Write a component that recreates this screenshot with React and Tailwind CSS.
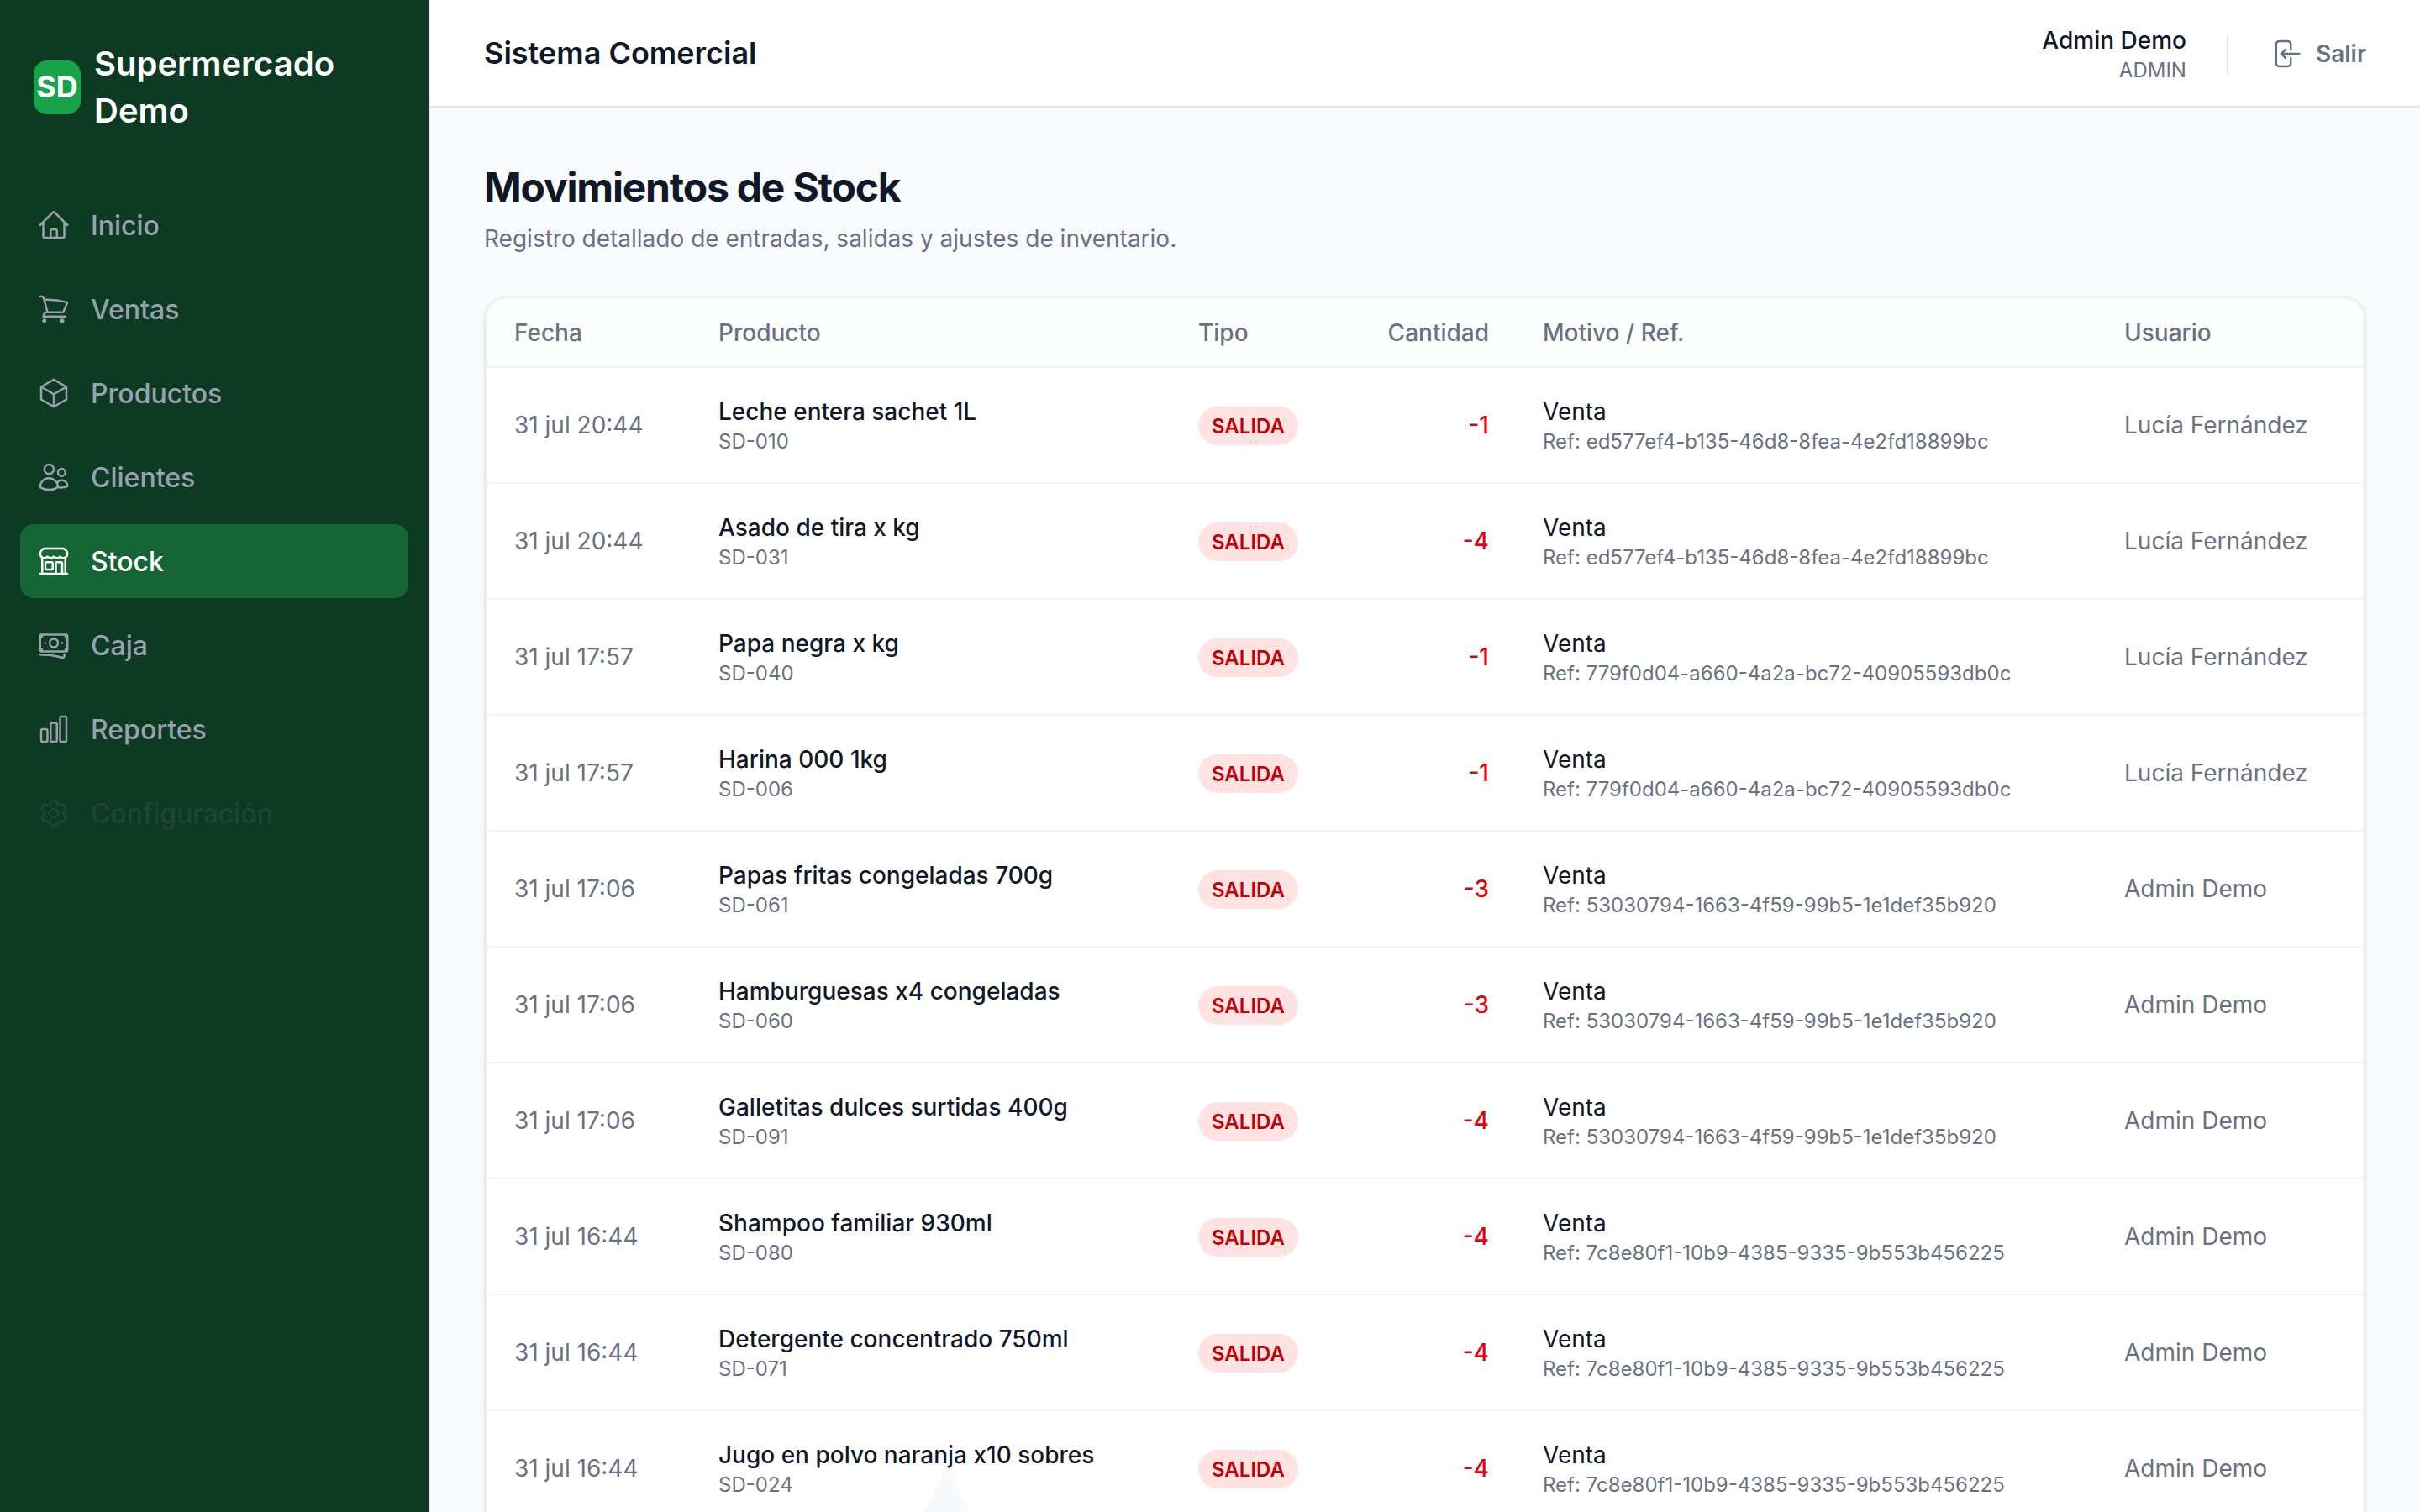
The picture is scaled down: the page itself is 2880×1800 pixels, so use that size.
import {
  HiOutlineHome, HiOutlineShoppingCart, HiOutlineCube, HiOutlineUsers,
  HiOutlineBuildingStorefront, HiOutlineBanknotes, HiOutlineChartBar,
  HiOutlineCog6Tooth, HiOutlineArrowLeftOnRectangle,
} from "react-icons/hi2";

const nav = [
  ["Inicio", HiOutlineHome],
  ["Ventas", HiOutlineShoppingCart],
  ["Productos", HiOutlineCube],
  ["Clientes", HiOutlineUsers],
  ["Stock", HiOutlineBuildingStorefront, "active"],
  ["Caja", HiOutlineBanknotes],
  ["Reportes", HiOutlineChartBar],
  ["Configuración", HiOutlineCog6Tooth, "disabled"],
];

const R1 = "ed577ef4-b135-46d8-8fea-4e2fd18899bc";
const R2 = "779f0d04-a660-4a2a-bc72-40905593db0c";
const R3 = "53030794-1663-4f59-99b5-1e1def35b920";
const R4 = "7c8e80f1-10b9-4385-9335-9b553b456225";

const rows = [
  ["31 jul 20:44", "Leche entera sachet 1L", "SD-010", "-1", R1, "Lucía Fernández"],
  ["31 jul 20:44", "Asado de tira x kg", "SD-031", "-4", R1, "Lucía Fernández"],
  ["31 jul 17:57", "Papa negra x kg", "SD-040", "-1", R2, "Lucía Fernández"],
  ["31 jul 17:57", "Harina 000 1kg", "SD-006", "-1", R2, "Lucía Fernández"],
  ["31 jul 17:06", "Papas fritas congeladas 700g", "SD-061", "-3", R3, "Admin Demo"],
  ["31 jul 17:06", "Hamburguesas x4 congeladas", "SD-060", "-3", R3, "Admin Demo"],
  ["31 jul 17:06", "Galletitas dulces surtidas 400g", "SD-091", "-4", R3, "Admin Demo"],
  ["31 jul 16:44", "Shampoo familiar 930ml", "SD-080", "-4", R4, "Admin Demo"],
  ["31 jul 16:44", "Detergente concentrado 750ml", "SD-071", "-4", R4, "Admin Demo"],
  ["31 jul 16:44", "Jugo en polvo naranja x10 sobres", "SD-024", "-4", R4, "Admin Demo"],
];

const COLS = "grid grid-cols-[243px_571px_225px_185px_692px_1fr] pl-8";

function NavItem({ label, Icon, state }) {
  const tone =
    state === "active" ? "bg-[#166534] text-white"
    : state === "disabled" ? "text-[#4a5565] opacity-35"
    : "text-[#99a1af]";
  return (
    <a className={`flex h-[88px] items-center gap-6 rounded-2xl px-5 text-[32px] font-medium ${tone}`}>
      <Icon className="size-10" />
      <span className="pt-0.5">{label}</span>
    </a>
  );
}

function Sidebar() {
  return (
    <aside className="flex w-[512px] shrink-0 flex-col border-r-2 border-[#e5e7eb] bg-[#0d3a22]">
      <div className="flex h-[208px] items-center gap-4 px-10 text-white">
        <div className="flex h-16 w-14 items-center justify-center rounded-2xl bg-[#16a34a] pb-0.5 text-4xl font-bold">SD</div>
        <div className="text-[40px] leading-[56px] font-semibold">Supermercado<br />Demo</div>
      </div>
      <nav className="flex flex-col gap-3 px-6 pt-4">
        {nav.map(([label, Icon, state]) => <NavItem key={label} label={label} Icon={Icon} state={state} />)}
      </nav>
    </aside>
  );
}

function Header() {
  return (
    <header className="flex h-32 shrink-0 items-center justify-between border-b-2 border-[#e5e7eb] bg-white px-16">
      <div className="text-[36px] font-semibold text-[#101828]">Sistema Comercial</div>
      <div className="flex items-center pt-0.5">
        <div className="text-right">
          <div className="text-[28px] leading-10 font-medium">Admin Demo</div>
          <div className="text-2xl leading-8 text-[#6a7282]">ADMIN</div>
        </div>
        <div className="ml-12 h-12 w-0.5 bg-[#e5e7eb]" />
        <div className="ml-12 flex items-center gap-4 text-[28px] font-semibold text-[#6a7282]">
          <HiOutlineArrowLeftOnRectangle className="size-10" />
          Salir
        </div>
      </div>
    </header>
  );
}

export default function App() {
  return (
    <div className="relative flex h-[1800px] w-[2880px] overflow-hidden bg-[#f9fafc] font-['Inter',sans-serif] text-[#101828]">
      <Sidebar />
      <div className="flex min-w-0 flex-1 flex-col">
        <Header />
        <main className="min-h-0 flex-1 overflow-hidden px-16 pt-16">
          <h1 className="text-5xl leading-[62px] font-bold tracking-tight">Movimientos de Stock</h1>
          <p className="mt-2.5 text-[28px] leading-10 text-[#6a7282]">Registro detallado de entradas, salidas y ajustes de inventario.</p>
          <div className="mx-0.5 mt-[50px] rounded-3xl border-2 border-[#f3f4f6] bg-white shadow-[0_0_0_2px_rgba(0,0,0,0.02),0_2px_6px_rgba(0,0,0,0.1),0_2px_4px_-2px_rgba(0,0,0,0.1)]">
            <div className={`${COLS} h-[82px] items-center rounded-t-[22px] border-b-2 border-[#f3f4f6] bg-[#fcfdfd] text-[28px] font-medium text-[#6a7282]`}>
              <div>Fecha</div>
              <div>Producto</div>
              <div>Tipo</div>
              <div className="pr-16 text-right">Cantidad</div>
              <div>Motivo / Ref.</div>
              <div>Usuario</div>
            </div>
            {rows.map(([date, name, code, qty, ref, user], i) => (
              <div key={i} className={`${COLS} h-[138px] items-center border-b-2 border-[#f3f4f6] text-[28px] text-[#6a7282]`}>
                <div>{date}</div>
                <div>
                  <div className="leading-10 font-medium text-[#101828]">{name}</div>
                  <div className="text-2xl leading-8">{code}</div>
                </div>
                <div className="flex pt-0.5"><span className="inline-flex h-[46px] items-center rounded-full bg-[#ffe2e2] px-4 pt-0.5 text-2xl font-semibold text-[#c10007]">SALIDA</span></div>
                <div className="pr-16 text-right font-medium text-[#e7000b]">{qty}</div>
                <div>
                  <div className="leading-10 text-[#101828]">Venta</div>
                  <div className="text-2xl leading-8">Ref: {ref}</div>
                </div>
                <div>{user}</div>
              </div>
            ))}
          </div>
        </main>
      </div>
      <svg className="absolute bottom-0 left-[1100px] h-[54px] w-[54px]" viewBox="0 0 54 54" fill="#f8f9fb">
        <path d="M27 0 54 54H0Z" />
      </svg>
    </div>
  );
}
